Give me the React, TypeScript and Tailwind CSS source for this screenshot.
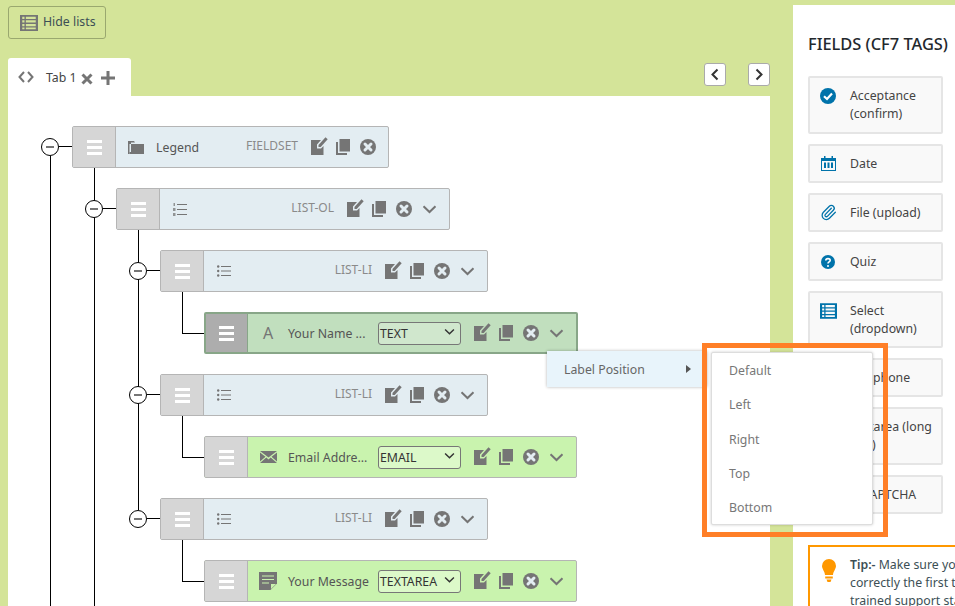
import type { ReactNode } from "react";
import { Paperclip } from "lucide-react";

const Table = ({ className }: { className: string }) => (
  <svg viewBox="0 0 20 18" className={className} fill="currentColor">
    <path fillRule="evenodd" d="M0 0h20v18H0zM2.5 2v2.5H5V2zM6.5 2v2.5h11V2zM2.5 6v2.5H5V6zM6.5 6v2.5h11V6zM2.5 10v2.5H5V10zM6.5 10v2.5h11V10zM2.5 14v2H5v-2zM6.5 14v2h11v-2z" />
  </svg>
);

const Edit = () => (
  <svg viewBox="0 0 17 18" className="mb-[2px] h-[18px] w-[17px] shrink-0 text-[#757575]" fill="currentColor">
    <path d="M0 3h10L6 7.5V11.5h4L12.5 9v9H0z" />
    <path d="M7.5 8 14.5.3l2.2 2-7 7.7H7.5z" />
  </svg>
);

const Copy = () => (
  <svg viewBox="0 0 14 16" className="h-[16px] w-[14px] shrink-0 text-[#757575]" fill="currentColor">
    <path d="M3.5 0H14v12.5H3.5z" />
    <path d="M0 3h2v11h9v2H0z" />
  </svg>
);

const CloseCircle = () => (
  <svg viewBox="0 0 16 16" className="h-4 w-4 shrink-0 text-[#757575]">
    <circle cx="8" cy="8" r="8" fill="currentColor" />
    <path d="M5 5l6 6M11 5l-6 6" stroke="#e3edf2" strokeWidth="3" strokeLinecap="round" />
  </svg>
);

const Chevron = ({ className }: { className: string }) => (
  <svg viewBox="0 0 15 9" className={className} fill="none" stroke="currentColor" strokeWidth="2">
    <path d="M1.5 1.2 7.5 7l6-5.8" />
  </svg>
);

const Folder = () => (
  <svg viewBox="0 0 16 13" className="h-[13px] w-4 text-[#757575]" fill="currentColor">
    <path d="M0 0h6l1 1.5H3V3h13v10H3V3H1.5v10H0z" />
    <path d="M1.5 11h2v2h-2z" />
  </svg>
);

const ListOl = () => (
  <svg viewBox="0 0 14 13" className="h-[13px] w-[14px] text-[#757575]">
    <path d="M4 1.5h10M4 6.5h10M4 11.5h10" stroke="currentColor" strokeWidth="1" />
    <path d="M.5 0h1.5v3H.5zM0 5h2.5v3H0zM0 10h2.5v3H0z" fill="currentColor" opacity=".75" />
  </svg>
);

const ListUl = () => (
  <svg viewBox="0 0 14 12" className="h-3 w-[14px] text-[#757575]">
    <path d="M4 1.5h10M4 6h10M4 10.5h10" stroke="currentColor" strokeWidth="1" />
    <circle cx="1.2" cy="1.5" r="1.2" fill="currentColor" />
    <circle cx="1.2" cy="6" r="1.2" fill="currentColor" />
    <circle cx="1.2" cy="10.5" r="1.2" fill="currentColor" />
  </svg>
);

const Mail = () => (
  <svg viewBox="0 0 17 12" className="h-3 w-[17px] text-[#757575]" fill="currentColor">
    <path d="M0 0h17L8.5 6.5z" />
    <path d="M0 1.5V10.5L5.5 5.7zM17 1.5V10.5L11.5 5.7z" />
    <path d="M0 12h17l-6.3-5.4-2.2 1.8-2.2-1.8z" />
  </svg>
);

const Note = () => (
  <svg viewBox="0 0 18 18" className="h-[18px] w-[18px] text-[#757575]">
    <path d="M0 0h18v11.5L11.5 18H0z" fill="currentColor" />
    <path d="M3 4h12M3 7.5h12M3 11h7" stroke="#c9f3ae" strokeWidth="1.2" />
    <path d="M12 12h5l-5 5z" fill="#c9f3ae" />
  </svg>
);

type RowProps = {
  left: number;
  width: number;
  icon: ReactNode;
  label?: string;
  tag?: string;
  select?: string;
  tone?: "list" | "field" | "active";
  chevron?: boolean;
  circle?: boolean;
  elbow?: boolean;
  drop?: number;
};

function Row({ left, width, icon, label, tag, select, tone = "list", chevron = true, circle, elbow, drop }: RowProps) {
  const box =
    tone === "list"
      ? "bg-[#e3edf2] border-[#b5b5b5] border"
      : tone === "field"
        ? "bg-[#c9f3ae] border-[#b5b5b5] border"
        : "bg-[#c1dfbe] border-[#88a688] border-2";
  return (
    <div className="relative h-[42px] shrink-0" style={{ marginLeft: left, width }}>
      {circle && (
        <>
          <div className="absolute left-[-13px] top-[20px] h-px w-[13px] bg-black" />
          <div className="absolute left-[-31px] top-[12px] z-10 flex h-[18px] w-[18px] items-center justify-center rounded-full border border-black bg-white">
            <div className="h-0.5 w-2 bg-[#757575]" />
          </div>
        </>
      )}
      {elbow && <div className="absolute left-[-22px] top-[-20px] h-[42px] w-[22px] border-b border-l border-black" />}
      {drop && <div className="absolute left-[22px] top-[42px] w-px bg-black" style={{ height: drop }} />}
      <div className={`flex h-full w-full items-stretch overflow-hidden rounded-[2px] ${box}`}>
        <div
          className={`flex shrink-0 flex-col items-center justify-center gap-[3px] border-r ${
            tone === "active" ? "w-[42px] border-[#88a688] bg-[#adadad]" : "w-[43px] border-[#b5b5b5] bg-[#d6d6d6]"
          }`}
        >
          <div className="h-[3px] w-[15px] bg-white" />
          <div className="h-[3px] w-[15px] bg-white" />
          <div className="h-[3px] w-[15px] bg-white" />
        </div>
        <div className="flex min-w-0 flex-1 items-center pr-3">
          <div className="flex h-full w-10 shrink-0 items-center justify-center">{icon}</div>
          {label && <span className={`pt-0.5 text-[12.3px] text-[#555] ${select ? "w-[90px] whitespace-nowrap" : ""}`}>{label}</span>}
          {select && (
            <div
              className={`flex h-[23px] w-[83px] shrink-0 items-center justify-between rounded-[3px] border border-[#777] pl-px pr-[5px] text-[12.3px] text-[#333] ${
                tone === "active" ? "bg-[#d0e7cd]" : "bg-[#dcf9c9]"
              }`}
            >
              <span className="pt-[3px]">{select}</span>
              <Chevron className="mb-0.5 h-2 w-[11px] shrink-0 text-[#333]" />
            </div>
          )}
          <div className="ml-auto flex items-center">
            {tag && <span className="mb-[3px] mr-[13px] text-xs text-[#8a8a8a]">{tag}</span>}
            <Edit />
            <div className="ml-2">
              <Copy />
            </div>
            <div className="ml-[10px]">
              <CloseCircle />
            </div>
            {chevron && <Chevron className="ml-[10px] h-[9px] w-[15px] text-[#757575]" />}
          </div>
        </div>
      </div>
    </div>
  );
}

function Field({ icon, tall, children }: { icon: ReactNode; tall?: boolean; children: ReactNode }) {
  return (
    <div
      className={`flex w-[135px] rounded-[2px] border-2 border-[#e5e5e5] bg-[#f9f9f9] text-[12.3px] leading-[18px] text-[#444] ${
        tall ? "h-[57.5px] pt-[9px]" : "h-[39px] pt-[9px]"
      }`}
    >
      <div className="flex h-[18px] w-10 shrink-0 items-center justify-center pr-1 text-[#0073aa]">{icon}</div>
      <div>{children}</div>
    </div>
  );
}

export default function App() {
  return (
    <div className="relative flex h-[606px] w-[955px] overflow-hidden bg-[#d4e499] font-['Noto_Sans',sans-serif]">
      <div className="ml-2 flex w-[762px] shrink-0 flex-col">
        <button className="mt-1.5 flex h-[33px] w-[98px] items-center gap-[5px] rounded-[3px] border border-[#9aa86f] pl-[11px] text-[12.3px] text-[#3c4f55]">
          <Table className="h-[18px] w-[18px] text-[#757575]" />
          Hide lists
        </button>
        <div className="mt-[19px] flex h-[38px] items-start justify-between">
          <div className="flex h-full w-[123px] items-center rounded-t-[3px] bg-white pl-[10px] text-[12.3px] text-[#444]">
            <svg viewBox="0 0 16 12" className="h-3 w-4 text-[#757575]" fill="none" stroke="currentColor" strokeWidth="2">
              <path d="M6 1 1.5 6 6 11M10 1l4.5 5L10 11" />
            </svg>
            <span className="ml-[12px] pt-0.5">Tab 1</span>
            <svg viewBox="0 0 12 12" className="ml-[4px] mt-[3px] h-3 w-3 shrink-0 text-[#757575]" fill="none" stroke="currentColor" strokeWidth="3">
              <path d="M1.5 1.5l9 9M10.5 1.5l-9 9" />
            </svg>
            <svg viewBox="0 0 14 14" className="ml-[8px] mt-px h-[14px] w-[14px] shrink-0 text-[#757575]" fill="none" stroke="currentColor" strokeWidth="3">
              <path d="M7 0v14M0 7h14" />
            </svg>
          </div>
          <div className="mt-[5px] flex gap-[22px]">
            <div className="flex h-[23px] w-[22px] items-center justify-center rounded-[3px] border border-[#aaa] bg-white">
              <svg viewBox="0 0 8 12" className="h-[13px] w-2 text-[#333]" fill="none" stroke="currentColor" strokeWidth="2">
                <path d="M6.5 1 1.5 6l5 5" />
              </svg>
            </div>
            <div className="flex h-[23px] w-[22px] items-center justify-center rounded-[3px] border border-[#aaa] bg-white">
              <svg viewBox="0 0 8 12" className="h-[13px] w-2 text-[#333]" fill="none" stroke="currentColor" strokeWidth="2">
                <path d="M1.5 1l5 5-5 5" />
              </svg>
            </div>
          </div>
        </div>
        <div className="relative flex flex-1 flex-col gap-5 overflow-hidden bg-white pt-[30px]">
          <div className="absolute left-[42px] top-[60px] h-[460px] w-px bg-black" />
          <Row left={64} width={317} icon={<Folder />} label="Legend" tag="FIELDSET" chevron={false} circle drop={450} />
          <Row left={108} width={334} icon={<ListOl />} tag="LIST-OL" circle drop={280} />
          <Row left={152} width={328} icon={<ListUl />} tag="LIST-LI" circle />
          <Row left={196} width={374} tone="active" icon={<span className="text-base text-[#757575]">A</span>} label="Your Name ..." select="TEXT" elbow />
          <Row left={152} width={328} icon={<ListUl />} tag="LIST-LI" circle />
          <Row left={196} width={373} tone="field" icon={<Mail />} label="Email Addre..." select="EMAIL" elbow />
          <Row left={152} width={328} icon={<ListUl />} tag="LIST-LI" circle />
          <Row left={196} width={373} tone="field" icon={<Note />} label="Your Message" select="TEXTAREA" elbow />
        </div>
      </div>

      <div className="ml-[23px] mt-[5px] w-[200px] shrink-0 bg-white pl-[15px]">
        <h2 className="mt-[29px] whitespace-nowrap text-[16.4px] font-medium leading-5 text-[#23282d]">FIELDS (CF7 TAGS)</h2>
        <div className="mt-[22px] flex flex-col gap-[10px]">
          <Field
            tall
            icon={
              <svg viewBox="0 0 16 16" className="h-4 w-4">
                <circle cx="8" cy="8" r="8" fill="currentColor" />
                <path d="M4 8.2l3 2.8 5-5.5" fill="none" stroke="#fff" strokeWidth="2.2" />
              </svg>
            }
          >
            Acceptance
            <br />
            (confirm)
          </Field>
          <Field
            icon={
              <svg viewBox="0 0 15 15" className="h-[15px] w-[15px]" fill="currentColor">
                <path d="M3 0h1.5v2h6V0H12v2h3v13H0V2h3zM1 5v9h13V5z" />
                <path d="M3 6.5h2V12H3zM6.5 6.5h2V12h-2zM10 6.5h2V12h-2z" />
              </svg>
            }
          >
            Date
          </Field>
          <Field icon={<Paperclip className="h-[17px] w-[17px]" strokeWidth={1.8} />}>File (upload)</Field>
          <Field
            icon={
              <svg viewBox="0 0 14 14" className="h-[14px] w-[14px]">
                <circle cx="7" cy="7" r="7" fill="currentColor" />
                <path d="M4.8 5.4C4.8 3 9.2 3 9.2 5.3c0 1.6-2.2 1.5-2.2 3.2" fill="none" stroke="#fff" strokeWidth="1.6" />
                <circle cx="7" cy="10.9" r="1" fill="#fff" />
              </svg>
            }
          >
            Quiz
          </Field>
          <Field tall icon={<Table className="h-4 w-[17px]" />}>
            Select
            <br />
            (dropdown)
          </Field>
          <Field icon={null}>Telephone</Field>
          <Field tall icon={null}>
            Textarea (long
            <br />
            text)
          </Field>
          <Field icon={null}>reCAPTCHA</Field>
        </div>
        <div className="mt-[31px] flex h-[80px] w-[300px] border-l-2 border-t-2 border-[#ff9800] pt-[9px] text-[12.3px] leading-[18px] text-[#3c4f55]">
          <div className="flex w-10 shrink-0 justify-center pr-[2px] pt-[3px]">
            <svg viewBox="0 0 14 23" className="h-[23px] w-[14px] text-[#ff9800]" fill="currentColor">
              <path d="M7 0a7 7 0 0 1 7 7c0 3-2.6 5-3 9H3C2.6 12 0 10 0 7a7 7 0 0 1 7-7z" />
              <path d="M3.2 17.5h7.6v2H3.2zM4.5 20.5h5L8.5 23h-3z" />
            </svg>
          </div>
          <div className="whitespace-nowrap">
            <b className="font-semibold">Tip:-</b> Make sure your form is set up
            <br />
            correctly the first time with our
            <br />
            trained support staff
          </div>
        </div>
      </div>

      {/* context menu sits over the tree and the fields panel */}
      <div className="absolute left-[547px] top-[351px] z-20 flex h-[36px] w-[160px] items-center justify-between bg-[#e8f4fb] pl-[17px] pr-[16px] text-[12.3px] text-[#666] shadow-[0_0_3px_rgba(0,0,0,0.3)]">
        <span className="pt-0.5">Label Position</span>
        <div className="h-0 w-0 border-y-[4px] border-l-[5px] border-y-transparent border-l-[#555]" />
      </div>
      <div className="absolute left-[711px] top-[352px] z-30 w-[162px] rounded-[2px] border border-[#ddd] bg-white pl-[17px] text-[12.3px] text-[#777] shadow-[0_0_3px_rgba(0,0,0,0.2)]">
        {["Default", "Left", "Right", "Top", "Bottom"].map((item) => (
          <div key={item} className="flex h-[34.3px] items-center pt-0.5">
            {item}
          </div>
        ))}
      </div>
      <div className="pointer-events-none absolute left-[702px] top-[343px] z-40 h-[194px] w-[186px] border-[5px] border-[#ff7f27]" />
    </div>
  );
}
